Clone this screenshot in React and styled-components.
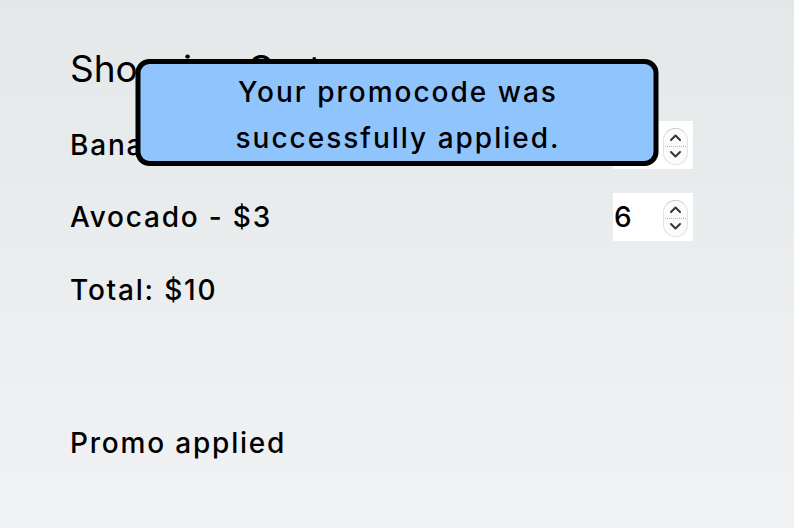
import React from "react";
import styled, { createGlobalStyle } from "styled-components";

const Global = createGlobalStyle`
  html, body { margin: 0; padding: 0; }
  body {
    min-height: 100vh;
    background: linear-gradient(180deg, #e4e8e9 0%, #f1f2f4 100%);
    font-family: Inter, "Noto Sans", sans-serif;
    color: #000;
  }
  #root { min-height: 100vh; }
`;

const Page = styled.main`
  position: relative;
  box-sizing: border-box;
  height: 528px;
  padding: 47px 101px 0 70px;
  display: flex;
  flex-direction: column;
`;

const Title = styled.h1`
  margin: 0;
  font-size: 37px;
  line-height: 44px;
  font-weight: 400;
`;

const List = styled.div`
  margin-top: 30px;
  display: flex;
  flex-direction: column;
  gap: 24px;
`;

const Row = styled.div`
  display: flex;
  align-items: center;
  justify-content: space-between;
  height: 48px;
`;

const Text = styled.span`
  font-size: 28px;
  line-height: 32px;
  font-weight: 500;
  letter-spacing: 1.8px;
`;

const QtyBox = styled.div`
  width: 80px;
  height: 48px;
  background: #fff;
  display: flex;
  align-items: center;
  box-sizing: border-box;
  padding-left: 1px;
  padding-right: 4px;
`;

const QtyInput = styled.input`
  width: 46px;
  border: none;
  outline: none;
  background: transparent;
  font-family: Inter, sans-serif;
  font-size: 28px;
  font-weight: 500;
  padding: 0;
  margin: 0;
  color: #000;
  -moz-appearance: textfield;
  &::-webkit-inner-spin-button,
  &::-webkit-outer-spin-button {
    -webkit-appearance: none;
    margin: 0;
  }
`;

const Spinner = styled.div`
  margin-left: 3px;
  margin-top: 2px;
  width: 25px;
  height: 37px;
  box-sizing: border-box;
  border: 1px solid #e3e3e3;
  border-top-color: #cccccc;
  border-radius: 12px;
  display: flex;
  flex-direction: column;
  align-items: center;
  justify-content: center;
  background: #fbfbfb;
`;

const SpinHalf = styled.div`
  height: 16px;
  display: flex;
  align-items: center;
  justify-content: center;
`;

const SpinDivider = styled.div`
  width: 21px;
  border-top: 1px dotted #b8b8b8;
`;

const Total = styled(Text).attrs({ as: "p" })`
  margin: 33px 0 0;
`;

const Promo = styled(Text).attrs({ as: "p" })`
  margin: 121px 0 0;
`;

const Toast = styled.div`
  position: absolute;
  top: 59px;
  left: 50%;
  transform: translateX(-50%);
  width: 523px;
  height: 107px;
  box-sizing: border-box;
  border: 5px solid #000;
  border-radius: 14px;
  background: #90c4fd;
  padding-top: 5px;
  padding-left: 2px;
  text-align: center;
  font-size: 28px;
  font-weight: 500;
  line-height: 46px;
  letter-spacing: 2px;
`;

const Chevron = ({ up }) => (
  <svg width="13" height="9" viewBox="0 0 13 9">
    <path
      d={up ? "M2 7 L6.5 2.5 L11 7" : "M2 2 L6.5 6.5 L11 2"}
      fill="none"
      stroke="#2f353c"
      strokeWidth="2"
      strokeLinecap="round"
      strokeLinejoin="round"
    />
  </svg>
);

const Quantity = ({ value }) => (
  <QtyBox>
    <QtyInput type="number" defaultValue={value} />
    <Spinner>
      <SpinHalf><Chevron up /></SpinHalf>
      <SpinDivider />
      <SpinHalf><Chevron /></SpinHalf>
    </Spinner>
  </QtyBox>
);

const items = [
  { name: "Banana", price: 1, qty: 4 },
  { name: "Avocado", price: 3, qty: 6 },
];

export default function App() {
  return (
    <>
      <Global />
      <Page>
        <Title>Shopping Cart</Title>
        <List>
          {items.map((it) => (
            <Row key={it.name}>
              <Text>{it.name} - ${it.price}</Text>
              <Quantity value={it.qty} />
            </Row>
          ))}
        </List>
        <Total>Total: $10</Total>
        <Promo>Promo applied</Promo>
        <Toast>
          Your promocode was
          <br />
          successfully applied.
        </Toast>
      </Page>
    </>
  );
}
